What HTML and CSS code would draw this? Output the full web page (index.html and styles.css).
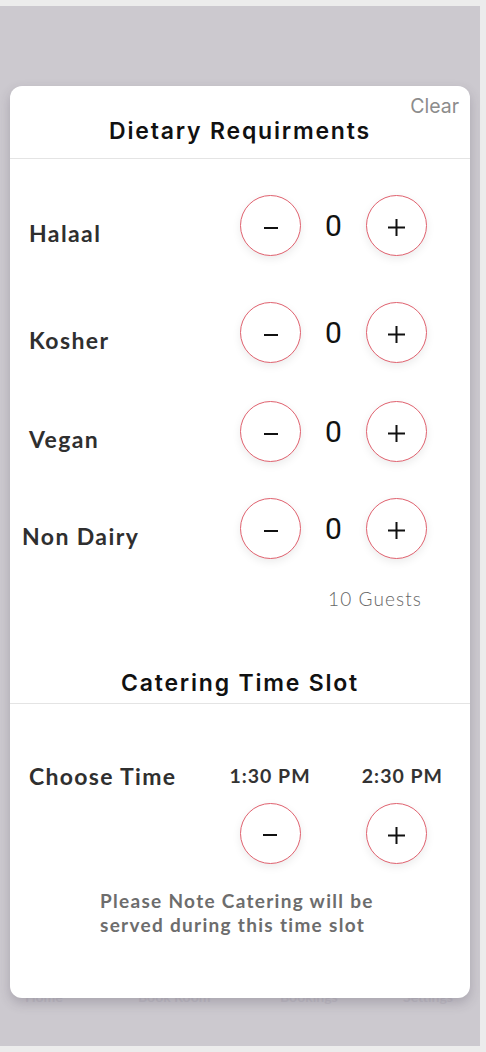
FILE: index.html
```html
<!DOCTYPE html>
<html lang="en">
<head>
<meta charset="utf-8">
<title>Dietary Requirments</title>
<link rel="stylesheet" href="styles.css">
</head>
<body>
<div class="screen">
  <div class="page-spacer"></div>
  <nav class="tabbar">
    <span class="tab">Home</span>
    <span class="tab">Book Room</span>
    <span class="tab">Bookings</span>
    <span class="tab">Settings</span>
  </nav>

  <section class="modal">
    <header class="modal-head">
      <button class="clear">Clear</button>
      <h2 class="title">Dietary Requirments</h2>
    </header>

    <div class="diet">
      <div class="row">
        <span class="label">Halaal</span>
        <div class="counter">
          <button class="circle"><svg width="14" height="2" viewBox="0 0 14 2"><rect width="14" height="2" fill="#111"/></svg></button>
          <span class="count">0</span>
          <button class="circle"><svg width="17" height="17" viewBox="0 0 17 17"><rect x="0" y="7.5" width="17" height="2" fill="#111"/><rect x="7.5" y="0" width="2" height="17" fill="#111"/></svg></button>
        </div>
      </div>
      <div class="row row--kosher">
        <span class="label">Kosher</span>
        <div class="counter">
          <button class="circle"><svg width="14" height="2" viewBox="0 0 14 2"><rect width="14" height="2" fill="#111"/></svg></button>
          <span class="count">0</span>
          <button class="circle"><svg width="17" height="17" viewBox="0 0 17 17"><rect x="0" y="7.5" width="17" height="2" fill="#111"/><rect x="7.5" y="0" width="2" height="17" fill="#111"/></svg></button>
        </div>
      </div>
      <div class="row row--vegan">
        <span class="label">Vegan</span>
        <div class="counter">
          <button class="circle"><svg width="14" height="2" viewBox="0 0 14 2"><rect width="14" height="2" fill="#111"/></svg></button>
          <span class="count">0</span>
          <button class="circle"><svg width="17" height="17" viewBox="0 0 17 17"><rect x="0" y="7.5" width="17" height="2" fill="#111"/><rect x="7.5" y="0" width="2" height="17" fill="#111"/></svg></button>
        </div>
      </div>
      <div class="row row--dairy">
        <span class="label label--wide">Non Dairy</span>
        <div class="counter">
          <button class="circle"><svg width="14" height="2" viewBox="0 0 14 2"><rect width="14" height="2" fill="#111"/></svg></button>
          <span class="count">0</span>
          <button class="circle"><svg width="17" height="17" viewBox="0 0 17 17"><rect x="0" y="7.5" width="17" height="2" fill="#111"/><rect x="7.5" y="0" width="2" height="17" fill="#111"/></svg></button>
        </div>
      </div>
    </div>

    <p class="guests">10 Guests</p>

    <div class="section-head">
      <h2 class="title">Catering Time Slot</h2>
    </div>

    <div class="time">
      <span class="time-label">Choose Time</span>
      <span class="time-value">1:30 PM</span>
      <span class="time-value time-value--end">2:30 PM</span>
      <button class="circle circle--c1"><svg width="14" height="2" viewBox="0 0 14 2"><rect width="14" height="2" fill="#111"/></svg></button>
      <button class="circle circle--c2"><svg width="17" height="17" viewBox="0 0 17 17"><rect x="0" y="7.5" width="17" height="2" fill="#111"/><rect x="7.5" y="0" width="2" height="17" fill="#111"/></svg></button>
    </div>

    <p class="note">Please Note Catering will be served during this time slot</p>
  </section>
</div>
</body>
</html>
```

FILE: styles.css
```css
* { box-sizing: border-box; }

html, body {
  margin: 0;
  padding: 0;
}

body {
  background: #ececec;
  width: 486px;
  height: 1052px;
  overflow: hidden;
  padding-top: 6px;
}

.screen {
  position: relative;
  width: 480px;
  height: 1040px;
  background: #ccc9cf;
  display: flex;
  flex-direction: column;
}

.page-spacer { flex: 1; }

.tabbar {
  height: 58px;
  display: grid;
  grid-template-columns: 113px 142px 123px auto;
  align-items: start;
  padding-left: 25px;
  font-family: "Lato", sans-serif;
  font-size: 14px;
  line-height: 18px;
  font-weight: 700;
  color: #c1bdc5;
  white-space: nowrap;
}

.modal {
  position: absolute;
  left: 10px;
  top: 80px;
  width: 460px;
  height: 912px;
  background: #fff;
  border-radius: 12px;
  box-shadow: 0 5px 12px rgba(60, 50, 70, 0.24);
  display: flex;
  flex-direction: column;
}

.modal-head {
  display: flex;
  flex-direction: column;
  padding: 9px 0 13px;
  border-bottom: 1px solid #e4e4e4;
}

.clear {
  align-self: flex-end;
  margin-right: 11px;
  border: 0;
  background: none;
  padding: 0;
  font-family: "Inter", sans-serif;
  font-size: 19.5px;
  line-height: 22px;
  color: #8c8c8c;
}

.title {
  margin: 0;
  text-align: center;
  font-family: "Inter", sans-serif;
  font-weight: 600;
  font-size: 23px;
  letter-spacing: 1.8px;
  line-height: 28px;
  color: #111;
}

.diet {
  padding-top: 36px;
  display: flex;
  flex-direction: column;
}

.row {
  height: 61px;
  display: flex;
  align-items: center;
  padding-left: 19px;
  padding-right: 43px;
}

.row--kosher { margin-top: 46px; }
.row--vegan { margin-top: 38px; }
.row--dairy { margin-top: 36px; }

.label {
  flex: 1;
  padding-top: 14px;
  font-family: "Lato", sans-serif;
  font-weight: 700;
  font-size: 23px;
  letter-spacing: 1.4px;
  color: #2f2f2f;
}

.label--wide { margin-left: -7px; }

.counter {
  display: flex;
  align-items: center;
}

.circle {
  width: 61px;
  height: 61px;
  border-radius: 50%;
  border: 1.5px solid #e0626f;
  background: #fff;
  box-shadow: 0 3px 8px rgba(0, 0, 0, 0.08);
  padding: 4px 0 0;
  display: flex;
  align-items: center;
  justify-content: center;
}

.circle svg { display: block; }

.count {
  width: 65px;
  text-align: center;
  font-family: "Roboto", sans-serif;
  font-size: 30px;
  line-height: 36px;
  color: #111;
}

.guests {
  margin: 28px 0 0;
  padding-right: 48px;
  text-align: right;
  font-family: "Lato", sans-serif;
  font-weight: 300;
  font-size: 19px;
  line-height: 24px;
  letter-spacing: 1.1px;
  color: #666;
}

.section-head {
  margin-top: 58px;
  padding-bottom: 6px;
  border-bottom: 1px solid #e4e4e4;
}

.time {
  display: grid;
  grid-template-columns: 201px 80px 56px 77px;
  grid-template-rows: 26px 62px;
  row-gap: 13px;
  align-items: center;
  padding: 59px 0 0 19px;
}

.time-label {
  grid-column: 1;
  grid-row: 1;
  white-space: nowrap;
  font-family: "Lato", sans-serif;
  font-weight: 700;
  font-size: 23px;
  letter-spacing: 1.3px;
  color: #2f2f2f;
  line-height: 26px;
}

.time-value {
  grid-row: 1;
  grid-column: 2;
  justify-self: center;
  white-space: nowrap;
  font-family: "Lato", sans-serif;
  font-weight: 700;
  font-size: 19.5px;
  letter-spacing: 1px;
  line-height: 24px;
  color: #333;
}

.time-value--end {
  grid-column: 4;
  justify-self: end;
}

.circle--c1 {
  grid-row: 2;
  grid-column: 2;
  justify-self: center;
}

.circle--c2 {
  grid-row: 2;
  grid-column: 4;
  justify-self: start;
}

.note {
  margin: 25px 0 0 90px;
  width: 320px;
  font-family: "Lato", sans-serif;
  font-weight: 700;
  font-size: 19px;
  line-height: 24px;
  letter-spacing: 1.3px;
  color: #6d6d6d;
}
```
